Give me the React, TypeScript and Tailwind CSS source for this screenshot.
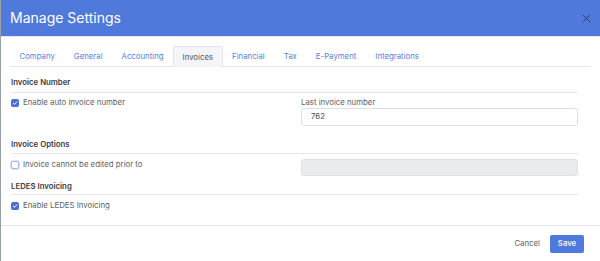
import React from 'react';

const tabs = ['Company', 'General', 'Accounting', 'Invoices', 'Financial', 'Tax', 'E-Payment', 'Integrations'];

const CheckBox = ({ checked }: { checked: boolean }) =>
    checked ? (
        <span className="flex items-center justify-center w-[8px] h-[8px] rounded-[2px] bg-[#4b6fd9] shrink-0">
            <svg viewBox="0 0 10 10" className="w-[6px] h-[6px]">
                <path d="M2 5.2 L4.2 7.2 L8 3" fill="none" stroke="white" strokeWidth="1.6" strokeLinecap="round" strokeLinejoin="round" />
            </svg>
        </span>
    ) : (
        <span className="block w-[8px] h-[8px] rounded-[2px] border border-[#a9b7de] bg-white shadow-[0_0_0_1px_rgba(120,150,230,0.25)] shrink-0" />
    );

const SectionTitle = ({ title, pb }: { title: string; pb: string }) => (
    <div className={`font-semibold text-[#3a3d42] leading-[12px] border-b border-[#e4e6ea] ${pb}`}>{title}</div>
);

export default function App() {
    return (
        <div className="w-[600px] h-[261px] bg-white overflow-hidden flex flex-col border-l border-[#9aa0a8]" style={{ fontFamily: 'Inter, "Noto Sans", sans-serif' }}>
            <div className="h-[37px] shrink-0 bg-[#5079dc] flex items-center justify-between pl-[9px] pr-[9px] border-b border-[#dfe7f8]">
                <span className="text-white text-[14px] leading-none">Manage Settings</span>
                <svg viewBox="0 0 10 10" className="w-[9px] h-[9px]">
                    <path d="M1 1 L9 9 M9 1 L1 9" stroke="#2f3a52" strokeWidth="1" />
                </svg>
            </div>

            <div className="flex-1 text-[7.8px] text-[#5f6268]">
                <div className="mt-[9px] ml-[9px] mr-[9px] flex border-b border-[#e2e5ea] h-[21px]">
                    {tabs.map(t =>
                        t === 'Invoices' ? (
                            <div key={t} className="px-[8.5px] pt-[1px] flex items-center bg-[#f4f5f8] border border-b-0 border-[#e2e5ea] rounded-t-[2px] text-[#55585e] -mb-px">
                                {t}
                            </div>
                        ) : (
                            <div key={t} className="px-[9.5px] pt-[1px] flex items-center text-[#5b80e0]">{t}</div>
                        )
                    )}
                </div>

                <div className="pl-[10px] pr-[22px]">
                    <div className="mt-[9px]">
                        <SectionTitle title="Invoice Number" pb="pb-[4px]" />
                    </div>
                    <div className="mt-[4px] flex">
                        <div className="w-[290px] flex items-center gap-[4px] h-[12px]">
                            <CheckBox checked />
                            <span>Enable auto invoice number</span>
                        </div>
                        <div className="flex-1">
                            <div className="leading-[11px] h-[11px]">Last invoice number</div>
                            <div className="h-[18px] border border-[#dcdfe4] rounded-[3px] flex items-center px-[9px] text-[#4a4d52]">762</div>
                        </div>
                    </div>

                    <div className="mt-[12px]">
                        <SectionTitle title="Invoice Options" pb="pb-[3px]" />
                    </div>
                    <div className="mt-[5px] flex">
                        <div className="w-[290px] flex items-center gap-[4px] h-[12px]">
                            <CheckBox checked={false} />
                            <span>Invoice cannot be edited prior to</span>
                        </div>
                        <div className="flex-1 h-[17px] bg-[#e9ecef] border border-[#dde0e4] rounded-[3px]" />
                    </div>

                    <div className="mt-[4px]">
                        <SectionTitle title="LEDES Invoicing" pb="pb-[2px]" />
                    </div>
                    <div className="mt-[5px] flex items-center gap-[4px] h-[12px]">
                        <CheckBox checked />
                        <span>Enable LEDES Invoicing</span>
                    </div>
                </div>
            </div>

            <div className="h-[36px] shrink-0 border-t border-[#e4e6ea] flex items-center justify-end pr-[16px] gap-[10px] text-[7.8px]">
                <span className="text-[#606369]">Cancel</span>
                <button className="h-[18px] w-[34px] bg-[#5079dc] text-white rounded-[2px] font-medium">Save</button>
            </div>
        </div>
    );
}
